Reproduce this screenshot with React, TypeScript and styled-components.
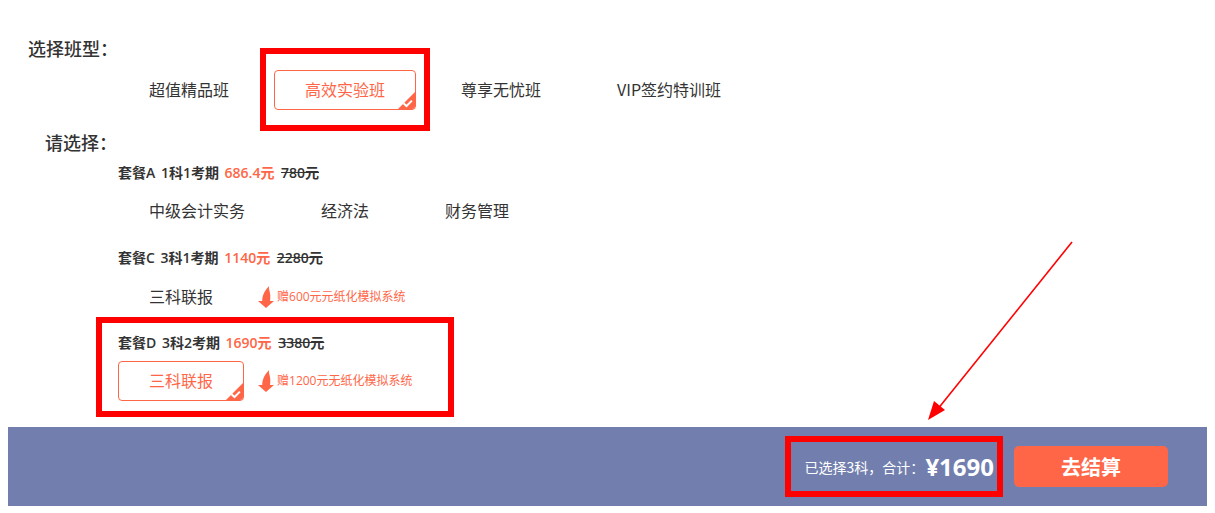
import React from 'react';
import styled, { createGlobalStyle } from 'styled-components';

const orange = '#ff6647';
const cjkStack = '"Noto Sans CJK SC", "Noto Sans", sans-serif';
const mixedStack = `"Open Sans", ${cjkStack}`;

const GlobalStyle = createGlobalStyle`
  html {
    overflow: hidden;
  }
  body {
    margin: 8px;
    background: #ffffff;
    font-family: ${cjkStack};
    color: #333333;
  }
`;

const Page = styled.div`
  position: relative;
  width: 1200px;
  height: 498px;
  display: flex;
  flex-direction: column;
`;

const Content = styled.div`
  flex: 1;
  padding-top: 28px;
`;

const SectionTitle = styled.div<{ $indent: number; $top: number }>`
  margin-top: ${(props) => props.$top}px;
  padding-left: ${(props) => props.$indent}px;
  font-size: 18px;
  line-height: 24px;
  font-weight: 500;
  color: #333333;
`;

const OptionRow = styled.div<{ $top: number }>`
  display: flex;
  align-items: center;
  gap: 14px;
  height: 40px;
  margin-top: ${(props) => props.$top}px;
  padding-left: 110px;
`;

const Option = styled.div<{ $active?: boolean }>`
  position: relative;
  box-sizing: border-box;
  height: 40px;
  padding: 0 30px;
  line-height: 36px;
  font-size: 16px;
  white-space: nowrap;
  overflow: hidden;
  border-radius: 4px;
  border: 1px solid ${(props) => (props.$active ? orange : 'transparent')};
  color: ${(props) => (props.$active ? orange : '#333333')};
`;

const CheckCorner = styled.svg`
  position: absolute;
  right: -1px;
  bottom: -1px;
  width: 19px;
  height: 19px;
  display: block;
`;

const PlanTitle = styled.div<{ $top: number }>`
  margin-top: ${(props) => props.$top}px;
  padding-left: 110px;
  font-family: ${mixedStack};
  font-size: 14px;
  line-height: 20px;
  font-weight: 600;
  word-spacing: 2px;
  color: #333333;
`;

const PlanPrice = styled.span`
  color: ${orange};
`;

const PlanOldPrice = styled.span`
  margin-left: 1px;
  text-decoration: line-through;
`;

const Gift = styled.div`
  display: flex;
  align-items: center;
  gap: 3px;
  font-family: ${mixedStack};
  font-size: 12px;
  line-height: 22px;
  color: ${orange};
`;

const GiftArrow = styled.svg`
  width: 16px;
  height: 22px;
  display: block;
`;

const BottomBar = styled.div`
  height: 79px;
  background: #727fae;
  display: flex;
  align-items: center;
  justify-content: flex-end;
  gap: 20px;
  padding-right: 40px;
`;

const Summary = styled.div`
  display: flex;
  align-items: center;
  color: #ffffff;
  font-size: 14px;
`;

const Total = styled.span`
  font-family: ${mixedStack};
  font-size: 24px;
  font-weight: 700;
  margin-left: 1px;
`;

const CheckoutButton = styled.button`
  width: 154px;
  height: 41px;
  border: none;
  border-radius: 5px;
  background: ${orange};
  color: #ffffff;
  font-family: ${cjkStack};
  font-size: 20px;
  font-weight: 700;
  padding: 0;
`;

const Highlight = styled.div<{ $x: number; $y: number; $w: number; $h: number }>`
  position: absolute;
  box-sizing: border-box;
  left: ${(props) => props.$x}px;
  top: ${(props) => props.$y}px;
  width: ${(props) => props.$w}px;
  height: ${(props) => props.$h}px;
  border: 6px solid #ff0000;
  pointer-events: none;
`;

const PointerArrow = styled.svg`
  position: absolute;
  left: 900px;
  top: 220px;
  width: 180px;
  height: 200px;
`;

const Check = () => (
  <CheckCorner viewBox="0 0 19 19">
    <path d="M19 0V19H0Z" fill={orange} />
    <path d="M6.5 12.2l3 2.8 5.4-5.4" fill="none" stroke="#ffffff" strokeWidth="2" />
  </CheckCorner>
);

const DownArrow = () => (
  <GiftArrow viewBox="0 0 16 22">
    <path
      d="M11 0C10.4 3 11.9 5 12.2 8.5C12.4 10.5 12.2 13 12.1 15H16L8 22L0 15H4.2C4.2 11 5.4 6 11 0Z"
      fill={orange}
    />
  </GiftArrow>
);

export default function App() {
  return (
    <Page>
      <GlobalStyle />
      <Content>
        <SectionTitle $indent={20} $top={0}>
          选择班型：
        </SectionTitle>
        <OptionRow $top={10}>
          <Option>超值精品班</Option>
          <Option $active>
            高效实验班
            <Check />
          </Option>
          <Option>尊享无忧班</Option>
          <Option>VIP签约特训班</Option>
        </OptionRow>
        <SectionTitle $indent={37} $top={20}>
          请选择：
        </SectionTitle>
        <PlanTitle $top={9}>
          套餐A 1科1考期 <PlanPrice>686.4元</PlanPrice> <PlanOldPrice>780元</PlanOldPrice>
        </PlanTitle>
        <OptionRow $top={8}>
          <Option>中级会计实务</Option>
          <Option>经济法</Option>
          <Option>财务管理</Option>
        </OptionRow>
        <PlanTitle $top={17}>
          套餐C 3科1考期 <PlanPrice>1140元</PlanPrice> <PlanOldPrice>2280元</PlanOldPrice>
        </PlanTitle>
        <OptionRow $top={9}>
          <Option>三科联报</Option>
          <Gift>
            <DownArrow />
            赠600元元纸化模拟系统
          </Gift>
        </OptionRow>
        <PlanTitle $top={16}>
          套餐D 3科2考期 <PlanPrice>1690元</PlanPrice> <PlanOldPrice>3380元</PlanOldPrice>
        </PlanTitle>
        <OptionRow $top={8}>
          <Option $active>
            三科联报
            <Check />
          </Option>
          <Gift>
            <DownArrow />
            赠1200元无纸化模拟系统
          </Gift>
        </OptionRow>
      </Content>
      <BottomBar>
        <Summary>
          已选择3科，合计：<Total>¥1690</Total>
        </Summary>
        <CheckoutButton>去结算</CheckoutButton>
      </BottomBar>
      <Highlight $x={252} $y={40} $w={170} $h={83} />
      <Highlight $x={88} $y={309} $w={358} $h={100} />
      <Highlight $x={777} $y={428} $w={218} $h={61} />
      <PointerArrow viewBox="0 0 180 200">
        <path d="M164 14L29 182" stroke="#ff0000" strokeWidth="1.6" fill="none" />
        <path d="M20 192L26 173L37 182Z" fill="#ff0000" />
      </PointerArrow>
    </Page>
  );
}
